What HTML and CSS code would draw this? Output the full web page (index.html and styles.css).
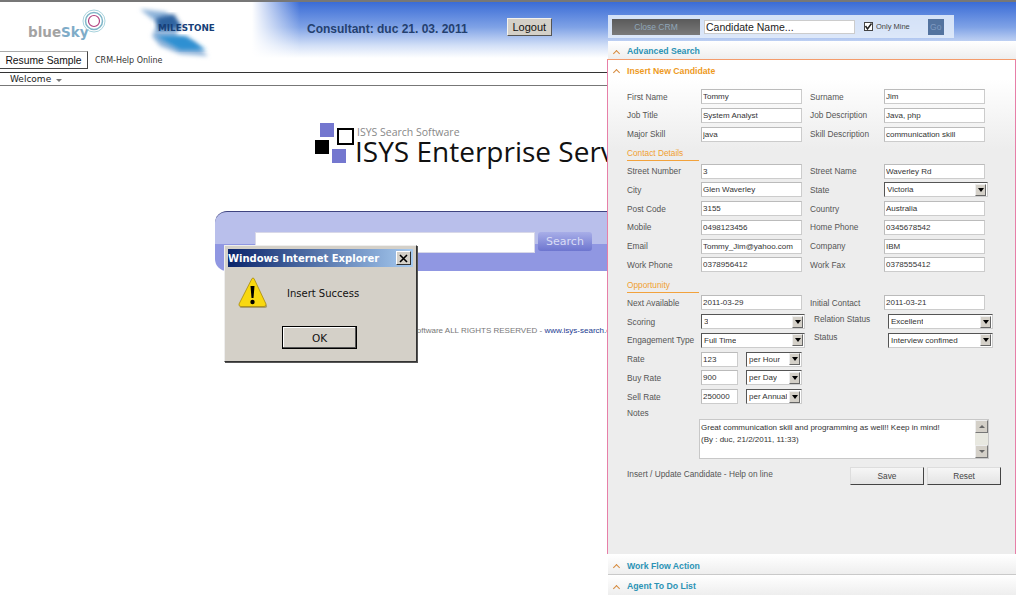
FILE: index.html
```html
<!DOCTYPE html>
<html lang="en">
<head>
    <meta charset="UTF-8">
    <title>Insert New Candidate</title>
    <link rel="stylesheet" href="styles.css">
</head>
<body>

    <div class="cabecera">
        <div class="marcas">
            <div class="bluesky">
                <span class="bluesky-texto"><b>blue</b><i>Sky</i></span>
                <svg class="bluesky-aros" width="24" height="24" viewBox="0 0 24 24">
                    <circle cx="12" cy="12" r="11" fill="none" stroke="#a8d3dd" stroke-width="1"/>
                    <circle cx="12" cy="12" r="8.5" fill="none" stroke="#7fb6c8" stroke-width="1.5"/>
                    <circle cx="12" cy="12" r="5.5" fill="#fff" stroke="#b0407e" stroke-width="1.2"/>
                </svg>
            </div>
            <svg class="milestone" width="90" height="56" viewBox="0 0 90 56">
                <defs>
                    <filter id="difuso"><feGaussianBlur stdDeviation="2"/></filter>
                </defs>
                <path d="M4 3 L30 6 L44 20 L40 30 L58 36 L72 50 L44 48 L24 40 L16 30 L22 18 Z" fill="#8fb4da" filter="url(#difuso)"/>
                <path d="M20 12 L38 8 L46 22 L22 24 Z" fill="#2f64a0" filter="url(#difuso)"/>
                <path d="M20 30 L50 30 L70 44 L44 44 Z" fill="#2f90d2" filter="url(#difuso)"/>
                <text x="22" y="25" class="milestone-texto">MILESTONE</text>
            </svg>
            <span class="consultor">Consultant: duc 21. 03. 2011</span>
            <button class="btn-logout">Logout</button>
        </div>
        <div class="herramientas">
            <button class="btn-resume">Resume Sample</button>
            <span class="ayuda-crm">CRM-Help Online</span>
        </div>
    </div>

    <div class="menu">
        <span>Welcome</span>
        <span class="menu-flecha"></span>
    </div>

    <div class="isys">
        <div class="isys-marca">
            <div class="isys-cuadros">
                <span class="cuadro c1"></span>
                <span class="cuadro c2"></span>
                <span class="cuadro c3"></span>
                <span class="cuadro c4"></span>
            </div>
            <div class="isys-textos">
                <div class="isys-sub">ISYS Search Software</div>
                <div class="isys-titulo">ISYS Enterprise Server</div>
            </div>
        </div>
        <div class="isys-busca">
            <input type="text" class="isys-input">
            <button class="isys-btn">Search</button>
        </div>
        <div class="isys-pie">Copyright ISYS Search Software ALL RIGHTS RESERVED - <a>www.isys-search.com</a></div>
    </div>

    <!-- ventana de alerta -->
    <div class="alerta">
        <div class="alerta-titulo">
            <span>Windows Internet Explorer</span>
            <span class="alerta-cerrar">
                <svg width="9" height="9" viewBox="0 0 9 9"><path d="M1 1 L8 8 M8 1 L1 8" stroke="#000" stroke-width="1.6"/></svg>
            </span>
        </div>
        <div class="alerta-cuerpo">
            <svg width="32" height="32" viewBox="0 0 32 32">
                <path d="M16 2 L30 29 Q30.500 31 28 31 L5 31 Q2 31 3 29 Z" fill="#7a6a20" opacity="0.5"/>
                <path d="M15 1.500 Q16 0.500 17 1.500 L29 27 Q29.500 29.500 27 29.500 L4 29.500 Q1.500 29.500 2 27 Z" fill="#f8d810" stroke="#a88a10" stroke-width="0.8"/>
                <path d="M13.500 9 L17.500 9 L16.500 21 L14.500 21 Z" fill="#000"/>
                <circle cx="15.500" cy="25" r="2.200" fill="#000"/>
            </svg>
            <span>Insert Success</span>
        </div>
        <div class="alerta-pie"><button class="alerta-ok">OK</button></div>
    </div>

    <!-- panel CRM -->
    <div class="panel">
        <div class="barra">
            <button class="btn-cerrar">Close CRM</button>
            <input type="text" class="barra-input" value="Candidate Name...">
            <span class="caja-check">
                <svg width="9" height="9" viewBox="0 0 9 9"><path d="M1.500 4 L3.500 7 L7.500 1.500" fill="none" stroke="#222" stroke-width="1.500"/></svg>
            </span>
            <span class="solo-mios">Only Mine</span>
            <button class="btn-go">Go</button>
        </div>

        <div class="seccion"><span class="chevron"></span>Advanced Search</div>

        <div class="activa">
            <div class="seccion seccion-activa"><span class="chevron"></span>Insert New Candidate</div>
            <div class="cuerpo">
                <div class="campos">
                    <label>First Name</label><input type="text" value="Tommy">
                    <label>Surname</label><input type="text" value="Jim">
                    <label>Job Title</label><input type="text" value="System Analyst">
                    <label>Job Description</label><input type="text" value="Java, php">
                    <label>Major Skill</label><input type="text" value="java">
                    <label>Skill Description</label><input type="text" value="communication skill">
                </div>

                <div class="subtitulo">Contact Details</div>
                <div class="campos">
                    <label>Street Number</label><input type="text" value="3">
                    <label>Street Name</label><input type="text" value="Waverley Rd">
                    <label>City</label><input type="text" value="Glen Waverley">
                    <label>State</label><div class="combo combo-ancho"><span>Victoria</span><i></i></div>
                    <label>Post Code</label><input type="text" value="3155">
                    <label>Country</label><input type="text" value="Australia">
                    <label>Mobile</label><input type="text" value="0498123456">
                    <label>Home Phone</label><input type="text" value="0345678542">
                    <label>Email</label><input type="text" value="Tommy_Jim@yahoo.com">
                    <label>Company</label><input type="text" value="IBM">
                    <label>Work Phone</label><input type="text" value="0378956412">
                    <label>Work Fax</label><input type="text" value="0378555412">
                </div>

                <div class="subtitulo subtitulo-op">Opportunity</div>
                <div class="campos">
                    <label>Next Available</label><input type="text" value="2011-03-29">
                    <label>Initial Contact</label><input type="text" value="2011-03-21">
                    <label>Scoring</label><div class="combo combo-ancho"><span>3</span><i></i></div>
                    <label class="corrida">Relation Status</label><div class="combo combo-corrido"><span>Excellent</span><i></i></div>
                    <label>Engagement Type</label><div class="combo combo-ancho"><span>Full Time</span><i></i></div>
                    <label class="corrida">Status</label><div class="combo combo-corrido"><span>Interview confimed</span><i></i></div>
                    <label>Rate</label>
                    <div class="tarifa"><input type="text" value="123"><div class="combo"><span>per Hour</span><i></i></div></div>
                    <div class="vacio"></div>
                    <label>Buy Rate</label>
                    <div class="tarifa"><input type="text" value="900"><div class="combo"><span>per Day</span><i></i></div></div>
                    <div class="vacio"></div>
                    <label>Sell Rate</label>
                    <div class="tarifa"><input type="text" value="250000"><div class="combo"><span>per Annual</span><i></i></div></div>
                    <div class="vacio"></div>
                </div>

                <label class="notas-label">Notes</label>
                <div class="notas">
                    <textarea readonly>Great communication skill and programming as well!! Keep in mind!
(By : duc, 21/2/2011, 11:33)</textarea>
                    <div class="scroll"><b class="arriba"></b><b class="abajo"></b></div>
                </div>

                <div class="acciones">
                    <span class="ayuda">Insert / Update Candidate - Help on line</span>
                    <button class="btn-form">Save</button>
                    <button class="btn-form">Reset</button>
                </div>
            </div>
        </div>

        <div class="seccion seccion-tras"><span class="chevron"></span>Work Flow Action</div>
        <div class="seccion seccion-ultima"><span class="chevron"></span>Agent To Do List</div>
    </div>

</body>
</html>
```

FILE: styles.css
```css
* {
    box-sizing: border-box;
}

html, body {
    height: 596px;
    overflow: hidden;
}

body {
    margin: 0;
    background: white;
    color: #222;
    font-family: "Liberation Sans", Arial, sans-serif;
    border-top: 2px solid #777;
    position: relative;
}

/* cabecera */

.cabecera {
    height: 71px;
    border-bottom: 1px solid #333;
    background:
        linear-gradient(90deg, white 252px, rgba(255,255,255,0) 300px),
        linear-gradient(#3a6cd6 0, #7fa2e6 45%, #d3e0f7 78%, white 100%) 0 0 / 100% 56px no-repeat;
}

.marcas {
    height: 49px;
    display: flex;
    align-items: flex-start;
}

.bluesky {
    width: 105px;
    margin-left: 28px;
    margin-top: 8px;
    display: flex;
}

.bluesky-texto {
    font-family: "DejaVu Sans", sans-serif;
    font-size: 13.500px;
    margin-top: 14px;
}

.bluesky-texto b {
    color: #a3a3a3;
}

.bluesky-texto i {
    color: #7facc8;
    font-style: normal;
    font-weight: bold;
}

.bluesky-aros {
    margin-left: -7px;
    margin-top: -1px;
}

.milestone {
    margin-left: 3px;
    margin-top: 4px;
    flex: none;
}

.milestone-texto {
    font-family: "DejaVu Sans", sans-serif;
    font-size: 8.800px;
    font-weight: bold;
    fill: #173f78;
}

.consultor {
    margin-left: 81px;
    margin-top: 20px;
    font-size: 12px;
    font-weight: bold;
    color: #24406f;
    white-space: nowrap;
}

.btn-logout {
    width: 45px;
    height: 18px;
    margin-left: 39px;
    margin-top: 16px;
    padding: 0;
    font: 11px "Liberation Sans", Arial, sans-serif;
    color: #111;
    background: #d4d0c8;
    border: 1px solid;
    border-color: #f4f2ec #555 #555 #f4f2ec;
}

.herramientas {
    display: flex;
    align-items: center;
}

.btn-resume {
    width: 89px;
    height: 18px;
    margin-left: -1px;
    padding: 0;
    font: 10.300px "Liberation Sans", Arial, sans-serif;
    color: #111;
    background: white;
    border: 1px solid;
    border-color: #aaa #444 #444 #aaa;
}

.ayuda-crm {
    margin-left: 7px;
    font-family: "DejaVu Sans", sans-serif;
    font-size: 8px;
    color: #333;
}

.menu {
    height: 13px;
    padding-left: 10px;
    border-bottom: 1px solid #777;
    font-family: "DejaVu Sans", sans-serif;
    font-size: 9px;
    line-height: 12px;
    color: #222;
    display: flex;
    align-items: center;
}

.menu-flecha {
    margin-left: 5px;
    margin-top: 2px;
    border: 3px solid transparent;
    border-top: 3px solid #777;
    border-bottom: 0;
}

/* pagina isys */

.isys {
    width: 607px;
    height: 300px;
    overflow: hidden;
    padding-left: 215px;
    white-space: nowrap;
}

.isys-marca {
    display: flex;
    margin-left: 100px;
    margin-top: 37px;
    height: 41px;
}

.isys-cuadros {
    width: 40px;
    height: 41px;
    flex: none;
    position: relative;
}

.cuadro {
    position: absolute;
    width: 14px;
    height: 14px;
}

.c1 {
    left: 5px;
    top: 0;
    background: #7477cf;
}

.c2 {
    left: 22px;
    top: 5px;
    width: 17px;
    height: 17px;
    background: white;
    border: 2px solid #000;
}

.c3 {
    left: 0;
    top: 17px;
    background: #000;
}

.c4 {
    left: 17px;
    top: 26px;
    background: #7477cf;
}

.isys-textos {
    margin-top: 4px;
}

.isys-sub {
    font-family: "Open Sans", sans-serif;
    font-size: 10.500px;
    line-height: 11px;
    margin-left: 2px;
    color: #888;
}

.isys-titulo {
    font-family: "Open Sans", sans-serif;
    font-size: 28px;
    line-height: 26px;
    color: #111;
}

.isys-busca {
    margin-top: 47px;
    height: 60px;
    width: 500px;
    padding: 20px 0 0 40px;
    display: flex;
    align-items: flex-start;
    gap: 3px;
    border-top: 1px solid #3f4480;
    border-radius: 12px 0 0 12px;
    background: linear-gradient(#b9bfeb 0, #b9bfeb 55%, #9097e2 55%);
}

.isys-input {
    width: 280px;
    height: 21px;
    border: 1px solid #d8d8e8;
    background: white;
}

.isys-btn {
    width: 54px;
    height: 19px;
    padding: 0;
    border: 0;
    border-radius: 3px;
    font: 11px "DejaVu Sans", sans-serif;
    color: #d9dcf6;
    background: linear-gradient(#a8aee8, #6d75cf);
}

.isys-pie {
    margin-top: 55px;
    margin-left: 112px;
    font-size: 8px;
    color: #777;
}

.isys-pie a {
    color: #1b3a90;
}

/* alerta */

.alerta {
    position: absolute;
    left: 224px;
    top: 243px;
    width: 193px;
    height: 117px;
    padding: 3px;
    background: #d4d0c8;
    border: 1px solid;
    border-color: #eee #333 #333 #eee;
    box-shadow: 1px 1px 0 #555;
}

.alerta-titulo {
    height: 18px;
    padding: 0 2px 0 0;
    display: flex;
    align-items: center;
    justify-content: space-between;
    font-family: "DejaVu Sans", sans-serif;
    font-size: 10px;
    font-weight: bold;
    color: white;
    background: linear-gradient(90deg, #0a246a, #a6caf0);
    white-space: nowrap;
}

.alerta-cerrar {
    width: 15px;
    height: 14px;
    display: flex;
    align-items: center;
    justify-content: center;
    background: #d4d0c8;
    border: 1px solid;
    border-color: #fff #333 #333 #fff;
}

.alerta-cuerpo {
    display: flex;
    align-items: center;
    height: 38px;
    margin-top: 7px;
    padding-left: 9px;
    gap: 18px;
    font-family: "DejaVu Sans", sans-serif;
    font-size: 10px;
    color: #111;
}

.alerta-pie {
    margin-top: 14px;
    padding-left: 54px;
}

.alerta-ok {
    width: 75px;
    height: 23px;
    padding: 0;
    font: 10.500px "DejaVu Sans", sans-serif;
    color: #111;
    background: #d4d0c8;
    border: 1px solid #000;
    box-shadow: inset -1px -1px 0 #555, inset 1px 1px 0 #fff;
}

/* panel */

.panel {
    position: absolute;
    left: 607px;
    top: 0;
    width: 409px;
    height: 594px;
    padding-top: 13px;
    font-family: "Liberation Sans", Arial, sans-serif;
    font-size: 8.300px;
    color: #555;
}

.barra {
    width: 346px;
    height: 23px;
    margin-left: 1px;
    margin-bottom: 3px;
    padding: 3px 4px;
    display: flex;
    align-items: center;
    background: rgba(225,235,250,0.9);
}

.btn-cerrar {
    width: 88px;
    height: 16px;
    padding: 0;
    border: 0;
    font: 8.500px "Liberation Sans", Arial, sans-serif;
    color: #8fa6b8;
    background: linear-gradient(#5a5a5a, #7a7a7a);
}

.barra-input {
    width: 151px;
    height: 14px;
    margin-left: 4px;
    padding: 0 1px;
    border: 1px solid #ccc;
    font: 10.500px "Liberation Sans", Arial, sans-serif;
    color: #222;
    background: white;
}

.caja-check {
    width: 9px;
    height: 9px;
    margin-left: 9px;
    border: 1px solid #444;
    background: white;
    display: flex;
    flex: none;
    align-items: center;
    justify-content: center;
}

.caja-check svg {
    flex: none;
}

.solo-mios {
    margin-left: 3px;
    font-size: 7.500px;
    color: #444;
    white-space: nowrap;
}

.btn-go {
    width: 16px;
    height: 16px;
    margin-left: 18px;
    padding: 0;
    border: 0;
    font: 8.500px "Liberation Sans", Arial, sans-serif;
    color: #7f9ac0;
    background: #53739f;
}

.seccion {
    height: 19px;
    margin-left: 1px;
    padding: 2px 0 0 6px;
    display: flex;
    align-items: center;
    font-size: 8.700px;
    font-weight: bold;
    color: #2b93b5;
    background: linear-gradient(#ffffff, #eeeeee);
    border-bottom: 1px solid #c9c9c9;
}

.seccion-tras {
    margin-top: 1px;
    height: 20px;
}

.seccion-ultima {
    height: 20px;
    border-bottom: 0;
}

.seccion-activa {
    margin-left: 0;
    padding-left: 6px;
    color: #ee9a1d;
    background: white;
    border-bottom: 0;
}

.chevron {
    width: 5px;
    height: 5px;
    margin-right: 8px;
    margin-top: 4px;
    flex: none;
    border-left: 1px solid #d68a3c;
    border-top: 1px solid #d68a3c;
    transform: rotate(45deg);
}

.activa {
    height: 495px;
    border: 1px solid #e77fa8;
    border-top-color: #f49b6b;
    margin-top: -1px;
}

.cuerpo {
    height: 475px;
    padding: 10px 0 0 19px;
    background: linear-gradient(white 0, #ededed 70px);
}

.campos {
    display: grid;
    grid-template-columns: 74px 109px 74px 101px;
    grid-auto-rows: 15px;
    row-gap: 3.750px;
    align-items: center;
}

.campos label {
    white-space: nowrap;
}

.campos input,
.tarifa input {
    height: 15px;
    min-width: 0;
    padding: 0 1px;
    border: 1px solid;
    border-color: #bbb #ccc #ccc #bbb;
    font: 8px "Liberation Sans", Arial, sans-serif;
    color: #333;
    background: white;
}

.campos > input {
    width: 101px;
}

.campos label.corrida {
    padding-left: 4px;
    margin-top: -6px;
}

.subtitulo {
    width: 72px;
    height: 15px;
    margin-top: 4px;
    border-bottom: 1px solid #f2a23c;
    color: #f0a030;
    line-height: 14px;
    white-space: nowrap;
}

.subtitulo-op {
    margin-top: 6px;
    margin-bottom: 2px;
}

.subtitulo + .campos {
    margin-top: 3px;
}

.subtitulo-op + .campos {
    margin-top: 0;
}

.combo {
    height: 15px;
    display: flex;
    align-items: center;
    justify-content: space-between;
    padding: 0 1px 0 2px;
    border: 1px solid;
    border-color: #555 #ccc #ccc #555;
    font-size: 8px;
    color: #333;
    background: white;
    white-space: nowrap;
    overflow: hidden;
}

.combo span {
    overflow: hidden;
}

.combo i {
    width: 11px;
    height: 12px;
    flex: none;
    background: #d4d0c8;
    border: 1px solid;
    border-color: #eee #666 #666 #eee;
    position: relative;
}

.combo i::after {
    content: "";
    position: absolute;
    left: 2px;
    top: 3px;
    border: 3px solid transparent;
    border-top: 4px solid #000;
    border-bottom: 0;
}

.combo-ancho {
    width: 104px;
}

.combo-corrido {
    width: 105px;
    margin-left: 4px;
}

.tarifa {
    display: flex;
    gap: 8px;
}

.tarifa input {
    width: 37px;
}

.tarifa .combo {
    width: 56px;
}

.vacio {
    grid-column: span 2;
}

.notas-label {
    display: block;
    margin-top: 4px;
    line-height: 11px;
}

.notas {
    display: flex;
    width: 290px;
    height: 40px;
    margin-left: 72px;
    background: white;
    border: 1px solid #c8c8c8;
}

.notas textarea {
    flex: 1;
    margin: 0;
    padding: 2px 1px;
    border: 0;
    resize: none;
    overflow: hidden;
    font: 8px/12px "Liberation Sans", Arial, sans-serif;
    color: #333;
    background: white;
}

.scroll {
    width: 13px;
    display: flex;
    flex-direction: column;
    justify-content: space-between;
    background: #e8e8e0;
}

.scroll b {
    height: 13px;
    background: #d4d0c8;
    border: 1px solid;
    border-color: #eee #777 #777 #eee;
    display: flex;
    align-items: center;
    justify-content: center;
}

.scroll b::after {
    content: "";
    border: 3px solid transparent;
}

.scroll .arriba::after {
    border-bottom: 3px solid #666;
    border-top: 0;
}

.scroll .abajo::after {
    border-top: 3px solid #666;
    border-bottom: 0;
}

.acciones {
    display: flex;
    align-items: center;
    margin-top: 8px;
    gap: 3px;
}

.ayuda {
    width: 220px;
    margin-top: -4px;
}

.btn-form {
    width: 74px;
    height: 18px;
    padding: 0;
    font: 8.300px "Liberation Sans", Arial, sans-serif;
    color: #444;
    background: linear-gradient(#f6f6f6, #e4e4e4);
    border: 1px solid;
    border-color: #ddd #444 #444 #ddd;
}
```
